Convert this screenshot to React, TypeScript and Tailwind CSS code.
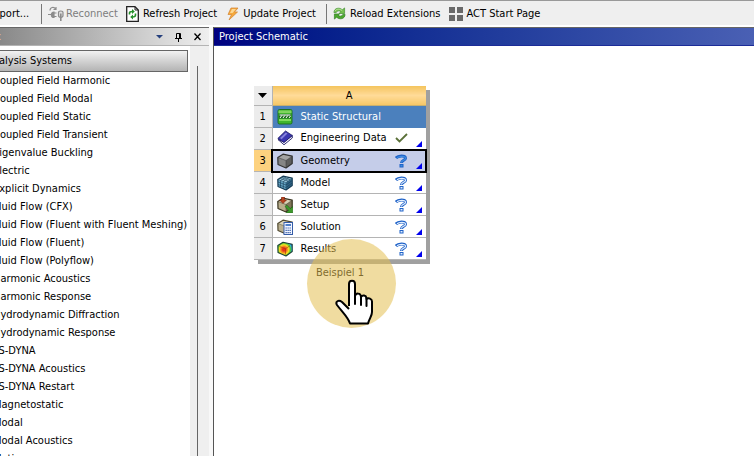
import React from "react";

const systems = [
  "Coupled Field Harmonic",
  "Coupled Field Modal",
  "Coupled Field Static",
  "Coupled Field Transient",
  "Eigenvalue Buckling",
  "Electric",
  "Explicit Dynamics",
  "Fluid Flow (CFX)",
  "Fluid Flow (Fluent with Fluent Meshing)",
  "Fluid Flow (Fluent)",
  "Fluid Flow (Polyflow)",
  "Harmonic Acoustics",
  "Harmonic Response",
  "Hydrodynamic Diffraction",
  "Hydrodynamic Response",
  "LS-DYNA",
  "LS-DYNA Acoustics",
  "LS-DYNA Restart",
  "Magnetostatic",
  "Modal",
  "Modal Acoustics",
  "Motion",
];

function ReconnectIcon() {
  return (
    <svg width="16" height="16" viewBox="0 0 16 16" fill="none" stroke="#8c8c8c" strokeWidth="1.2">
      <path d="M2 4.500C2 1 6 0.500 7.500 3M5.500 3.500H8V1" />
      <path d="M0 8.500H3M6 7H8.500M6 10.500H8.500" />
      <path d="M6 6C2.500 6 2.500 11.500 6 11.500Z" fill="#8c8c8c" />
      <path d="M10.500 6V9.500C10.500 12 15 12 15 9.500V6.500C15 4.500 10.500 4.500 10.500 6.500" fill="#dedede" />
      <path d="M12.800 7.500V15" strokeWidth="1.600" />
    </svg>
  );
}

function RefreshIcon() {
  return (
    <svg width="13" height="16" viewBox="0 0 13 16" fill="none">
      <path d="M0.700 0.700H9L12.300 4V15.300H0.700Z" fill="#fff" stroke="#222" strokeWidth="1.300" />
      <path d="M9 1V4H12" stroke="#222" />
      <path d="M3.500 8.500V7C3.500 5.500 5 5.500 6.500 5.500" stroke="#27912b" strokeWidth="1.600" />
      <path d="M6 3L8.800 5.500L6 8Z" fill="#27912b" />
      <path d="M9.500 7.500V9C9.500 11 8 11 6.500 11" stroke="#27912b" strokeWidth="1.600" />
      <path d="M7 8.500L4.200 11L7 13.500Z" fill="#27912b" />
    </svg>
  );
}

function BoltIcon() {
  return (
    <svg width="12" height="14" viewBox="0 0 12 14">
      <path d="M4 1H11L7.500 5H10.500L2 13L4.500 7.500H1Z" fill="#f6a93c" stroke="#d18330" strokeWidth="0.700" />
      <path d="M5 2H9L5.500 6H3Z" fill="#fcd894" />
    </svg>
  );
}

function ReloadIcon() {
  return (
    <svg width="13" height="13" viewBox="0 0 14 14">
      <path d="M1 6C1 1 7 0 10 3L12.500 1V7H6.500L8.500 5C6.500 3.500 4 4 3.500 6Z" fill="#72bf4c" stroke="#3b8a2b" strokeWidth="0.700" />
      <path d="M13 8C13 13 7 14 4 11L1.500 13V7.500H7L5.500 9C7.500 10.500 10 10 10.500 8Z" fill="#4ba82c" stroke="#2d7a22" strokeWidth="0.700" />
      <path d="M2 4.500C4 1.500 7.500 2 10 4" fill="none" stroke="#c2e8a6" />
    </svg>
  );
}

function TilesIcon() {
  return (
    <svg width="14" height="14" viewBox="0 0 14 14" fill="#696969">
      <path d="M0 0H6V6H0ZM8 0H14V6H8ZM0 8H6V14H0ZM8 8H14V14H8Z" />
    </svg>
  );
}

function StructuralIcon() {
  return (
    <svg width="16" height="16" viewBox="0 0 16 16">
      <rect x="1" y="0.500" width="14" height="14.500" rx="1.500" fill="#3fb52e" stroke="#176b18" strokeWidth="0.900" />
      <path d="M1.500 1.500H14.500V4H1.500Z" fill="#7fd45e" />
      <path d="M2 5H14V9.500H2Z" fill="#1a6a1e" />
      <path d="M3 9L4.800 6.500M6 9L7.800 6.500M9 9L10.800 6.500M12 9L13.500 7M2.500 6H13.500" stroke="#fff" />
      <path d="M2 10H14V12H2Z" fill="#7fdc5c" />
    </svg>
  );
}

function BookIcon() {
  return (
    <svg width="16" height="16" viewBox="0 0 16 16" strokeLinejoin="round">
      <path d="M1 9.500L7 14.800L15.300 8V5.500L7 12Z" fill="#f0f0f8" stroke="#22206a" strokeWidth="0.900" />
      <path d="M0.800 8.500L8.500 1L15.300 5.500L7 12.500Z" fill="#3a36b0" stroke="#22206a" strokeWidth="0.900" />
      <path d="M3 8L8.800 2.500L10.500 3.600L4.600 9.200Z" fill="#8582dc" />
    </svg>
  );
}

type CubeColors = { top: string; left: string; right: string; edge: string };

function CubeFaces({ top, left, right, edge }: CubeColors) {
  return (
    <g strokeLinejoin="round">
      <path d="M0.800 4.500L6 1.200L15.200 3.200L9 7.500Z" fill={top} />
      <path d="M0.800 4.500L9 7.500V15L1 11.500Z" fill={left} />
      <path d="M9 7.500L15.200 3.200V10.500L9 15Z" fill={right} />
      <path d="M0.800 4.500L9 7.500L15.200 3.200M9 7.500V15" fill="none" stroke={edge} strokeWidth="0.500" />
      <path d="M0.800 4.500L6 1.200L15.200 3.200V10.500L9 15L1 11.500Z" fill="none" stroke={edge} strokeWidth="1.200" />
    </g>
  );
}

function GeometryIcon() {
  return (
    <svg width="16" height="16" viewBox="0 0 16 16">
      <CubeFaces top="#a3a3a3" left="#858585" right="#5d5d5d" edge="#333333" />
    </svg>
  );
}

function ModelIcon() {
  return (
    <svg width="16" height="16" viewBox="0 0 16 16">
      <CubeFaces top="#a2d2e5" left="#65a6c5" right="#3a7598" edge="#153b55" />
      <path d="M3.500 5.500V12.500M6.300 6.500V14M1 7L9 10L15 5.700M1 9.500L9 12.500L15 8.200M11 6V13.500M13 4.700V12M2.700 3.300L11 6M4.500 2.200L13 4.700M3.500 5.500L9 2M6.300 6.500L12 2.700" fill="none" stroke="#153b55" strokeWidth="0.600" />
    </svg>
  );
}

function SetupIcon() {
  return (
    <svg width="16" height="16" viewBox="0 0 16 16">
      <CubeFaces top="#d8d0b4" left="#b9ae8c" right="#7f7658" edge="#39341f" />
      <path d="M4.500 0H7.500V3H9.500L6 6.500L2.500 3H4.500Z" fill="#b8441f" stroke="#6c1b0b" strokeWidth="0.500" />
      <path d="M8 9.500L9.800 8L13.300 11.500L15.800 9.500V16H9L11.500 13.300Z" fill="#3d9a2b" stroke="#1c5b16" strokeWidth="0.500" />
    </svg>
  );
}

function SolutionIcon() {
  return (
    <svg width="16" height="16" viewBox="0 0 16 16">
      <CubeFaces top="#dcd5ba" left="#bbb190" right="#8a8060" edge="#514a31" />
      <rect x="7" y="3.500" width="8.500" height="12" fill="#f2f5ff" stroke="#345ca7" />
      <path d="M8.500 5H14V7H8.500Z" fill="#4e7fc9" />
      <path d="M8.500 9H14M8.500 11.300H14M8.500 13.600H14" stroke="#345ca7" strokeWidth="1.200" strokeDasharray="1.300 0.700" />
    </svg>
  );
}

function ResultsIcon() {
  return (
    <svg width="16" height="16" viewBox="0 0 16 16" strokeLinejoin="round">
      <defs>
        <radialGradient id="contour" gradientUnits="userSpaceOnUse" cx="7" cy="8.500" r="9.500">
          <stop offset="0.150" stopColor="#e8321a" />
          <stop offset="0.350" stopColor="#f7941f" />
          <stop offset="0.500" stopColor="#f6e022" />
          <stop offset="0.680" stopColor="#4fc832" />
          <stop offset="0.800" stopColor="#35c5cf" />
          <stop offset="0.950" stopColor="#2353cf" />
        </radialGradient>
      </defs>
      <path d="M0.800 4.500L6 1.200L15.200 3.200V10.500L9 15L1 11.500Z" fill="url(#contour)" stroke="#1d4030" strokeWidth="1.100" />
      <path d="M2.500 5.500L8.500 7.700L13 4.700M8.500 7.700V13.500" fill="none" stroke="#a3330f" strokeWidth="0.600" />
    </svg>
  );
}

function QuestionIcon({ solid = false }: { solid?: boolean }) {
  return (
    <svg width="13" height="14" viewBox="0 0 13 14" fill="none" aria-label="Attention required">
      <path d="M1 4C3 1.500 10.500 1 10.500 4.200C10.500 6.500 6.500 6 6.500 9" stroke="#1f62c8" strokeWidth="3" />
      <rect x="4.500" y="10" width="4" height="3.500" fill="#1f62c8" />
      <path d="M2 3.800C4 2 10.500 1.500 10.500 4.200C10.500 6.500 6.500 6 6.500 8.500" stroke={solid ? "#3f8de0" : "#e4f0ff"} strokeWidth="1.200" />
      <rect x="5.500" y="11" width="2" height="1.500" fill={solid ? "#3f8de0" : "#e4f0ff"} />
    </svg>
  );
}

function CheckIcon() {
  return (
    <svg width="13" height="14" viewBox="0 0 13 14" fill="none" aria-label="Up to date">
      <path d="M1 7L4.500 10.500L12 3" stroke="#5a7038" strokeWidth="1.800" />
    </svg>
  );
}

const cells = [
  { label: "Engineering Data", icon: <BookIcon />, state: <CheckIcon /> },
  { label: "Geometry", icon: <GeometryIcon />, state: <QuestionIcon solid />, selected: true },
  { label: "Model", icon: <ModelIcon />, state: <QuestionIcon /> },
  { label: "Setup", icon: <SetupIcon />, state: <QuestionIcon /> },
  { label: "Solution", icon: <SolutionIcon />, state: <QuestionIcon /> },
  { label: "Results", icon: <ResultsIcon />, state: <QuestionIcon /> },
];

function Toolbar() {
  return (
    <header className="flex h-[27px] shrink-0 items-center whitespace-nowrap border-b-2 border-t border-b-white border-t-[#999999] bg-[#efefef] pt-px">
      <button className="-ml-[13px] w-[54px] text-left">Import...</button>
      <span className="h-5 w-px bg-[#777777]" />
      <button disabled className="ml-1.5 flex items-center gap-0.5 text-[#7d7d7d]">
        <ReconnectIcon />
        Reconnect
      </button>
      <button className="ml-2 flex items-center gap-1">
        <RefreshIcon />
        Refresh Project
      </button>
      <button className="ml-2.5 flex items-center gap-1">
        <BoltIcon />
        Update Project
      </button>
      <span className="ml-2.5 h-5 w-px bg-[#777777]" />
      <button className="ml-1.5 flex items-center gap-1">
        <ReloadIcon />
        Reload Extensions
      </button>
      <button className="ml-2 flex items-center gap-1">
        <TilesIcon />
        ACT Start Page
      </button>
    </header>
  );
}

function Toolbox() {
  return (
    <aside className="flex w-[209px] shrink-0 flex-col overflow-hidden bg-[#efefef]">
      <div className="flex h-[19px] shrink-0 items-center border-b border-t border-b-[#b4b4b4] border-t-[#666666] bg-linear-to-r from-[#898989] to-[#efefef]">
        <h2 className="-ml-[36px] grow text-[#ffe5c8]">Toolbox</h2>
        <div className="flex items-center gap-2.5 pr-[7px]">
          <button aria-label="Menu">
            <svg width="9" height="9" viewBox="0 0 9 9"><path d="M1 3H8L4.500 6.500Z" fill="#26407d" /></svg>
          </button>
          <button aria-label="Pin">
            <svg width="9" height="10" viewBox="0 0 9 10" fill="none" stroke="#000"><path d="M2.500 6V1.500H6.500V6M5.500 1.500V6M1 6.500H8M4.500 6.500V10" /></svg>
          </button>
          <button aria-label="Close">
            <svg width="9" height="9" viewBox="0 0 9 9" stroke="#000" strokeWidth="1.300"><path d="M1.500 1.500L7.500 8M7.500 1.500L1.500 8" /></svg>
          </button>
        </div>
      </div>
      <div className="flex min-h-0 grow">
        <div className="w-[190px] shrink-0 bg-white pr-0.5 pt-1">
          <button className="flex h-[22px] w-full items-center border border-l-0 border-[#666666] bg-linear-to-b from-[#f2f2f2] to-[#b4b4b4]">
            <span className="-ml-[14px] leading-[14px]">Analysis Systems</span>
          </button>
          <ul className="-ml-[7px] whitespace-nowrap">
            {systems.map((name) => (
              <li key={name} className="h-[18px] leading-[18px]">{name}</li>
            ))}
          </ul>
        </div>
        <div className="ml-[7px] mt-5 w-px bg-[#666666]" />
      </div>
    </aside>
  );
}

function SystemTable() {
  return (
    <table className="w-[172px] table-fixed border-collapse bg-white shadow-[4px_4px_0_#a0a0a0]">
      <thead>
        <tr className="h-[19px]">
          <th className="w-[18px] border-r border-[#b4b4b4] bg-[#ececec] p-0">
            <svg className="mx-auto" width="9" height="5" viewBox="0 0 9 5"><path d="M0 0H9L4.500 5Z" fill="#000" /></svg>
          </th>
          <th className="border-b border-[#c8b070] bg-linear-to-b from-[#f4c45c] via-[#ffdb98] to-[#f6c766] p-0 pt-px font-normal leading-[18px]">A</th>
        </tr>
      </thead>
      <tbody>
        <tr className="h-[22px]">
          <th className="border border-l-0 border-[#b4b4b4] bg-[#ececec] p-0 font-normal">1</th>
          <td className="bg-[#4b80bd] p-0 text-white">
            <div className="flex h-[21px] items-center gap-2 pl-1"><StructuralIcon />Static Structural</div>
          </td>
        </tr>
        {cells.map((cell, i) => (
          <tr key={cell.label} className="h-[22px]">
            <th className={`border border-l-0 border-[#b4b4b4] p-0 font-normal ${cell.selected ? "bg-[#fdd27f]" : "bg-[#ececec]"}`}>
              {i + 2}
            </th>
            <td className={`border-b border-[#b4b4b4] p-0 ${cell.selected ? "bg-[#c5cde9] outline-2 -outline-offset-1 outline-black" : ""}`}>
              <div className="flex h-[21px] items-center gap-2 px-1">
                {cell.icon}
                <span className="grow whitespace-nowrap">{cell.label}</span>
                {cell.state}
                <svg className="mb-0.5 self-end" width="6" height="6" viewBox="0 0 6 6"><path d="M6 0V6H0Z" fill="#0000ee" /></svg>
              </div>
            </td>
          </tr>
        ))}
      </tbody>
    </table>
  );
}

function Pointer() {
  return (
    <div className="pointer-events-none absolute left-[53px] top-[153px] flex size-[89px] items-center justify-center rounded-full bg-[#e4bf52]/55">
      <svg className="ml-1 mt-9" width="38" height="46" viewBox="0 0 38 46">
        <path
          d="M14 27V5C14 0.500 20 0.500 20 5V17C21 13.500 25.500 14 26 17.500V18C27.500 15.500 31 16 31.500 19V20C33.500 18.500 37 19.500 37 22.500V33C37 37 34.500 39 33 44.500H15C13 38 8 34 2 26C0 22.500 3.500 20.500 7 23L14 30"
          fill="#fff"
          stroke="#000"
          strokeWidth="2"
          strokeLinejoin="round"
        />
        <path d="M20 16V25M26 17.500V26M31.500 19V27" stroke="#000" strokeWidth="2" strokeLinecap="round" />
      </svg>
    </div>
  );
}

function Schematic() {
  return (
    <main className="ml-1 flex min-w-0 grow flex-col border-l border-[#555555] bg-white">
      <h2 className="h-[19px] shrink-0 border-b border-t border-b-[#1c2c98] border-t-[#666666] bg-linear-to-r from-[#000080] to-[#4a60b4] pl-[5px] pt-px leading-4 text-white">
        Project Schematic
      </h2>
      <div className="pl-10 pt-10">
        <div className="relative w-[172px]">
          <SystemTable />
          <p className="pt-1 text-center leading-[18px]">Beispiel 1</p>
          <Pointer />
        </div>
      </div>
    </main>
  );
}

export default function App() {
  return (
    <div className="flex h-screen flex-col overflow-hidden bg-[#f8f8f8] font-['DejaVu_Sans_Condensed','Noto_Sans',sans-serif] text-[11px] leading-4 text-black">
      <Toolbar />
      <div className="flex min-h-0 grow">
        <Toolbox />
        <Schematic />
      </div>
    </div>
  );
}
